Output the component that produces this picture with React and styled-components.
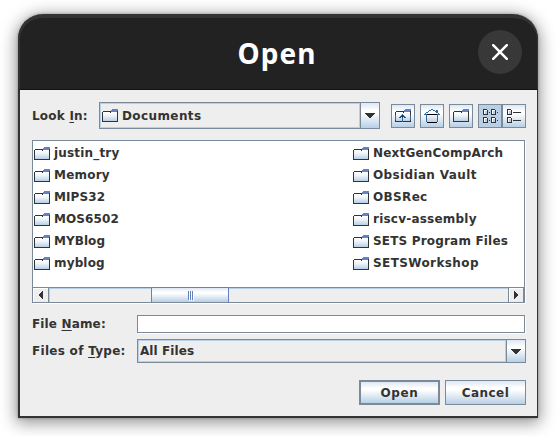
import React from "react";
import styled, { createGlobalStyle, css } from "styled-components";

const line = "#7a8a99";
const pale = "#b8cfe5";
const ink = "#333333";
const steel = "linear-gradient(#dde8f3 0%, #ffffff 30%, #ffffff 38%, #b8cfe5 100%)";

const Global = createGlobalStyle`
  *{box-sizing:border-box}
  html,body{margin:0;background:#fff;overflow:hidden}
  body{font:bold 12px/16px "DejaVu Sans",sans-serif;color:${ink}}
  button{font:inherit;color:inherit;margin:0;padding:0;border-radius:0}
  svg{display:block;flex:none}
`;
const Stage = styled.main`width:557px;height:436px;padding:14px 19px 18px 18px;background:#fff;overflow:hidden;`;
const Window = styled.section`
  width:520px;height:404px;border:2px solid #333;border-right-width:1px;border-top:0;
  border-radius:25px 25px 0 0;background:#eee;box-shadow:0 3px 16px 2px rgba(0,0,0,.42),0 0 3px rgba(0,0,0,.3);
`;
const TitleBar = styled.header`
  height:76px;margin:0 -1px 0 -2px;padding:0 15px 1px 0;display:grid;grid-template-columns:56px 1fr 44px;align-items:center;
  background:#222;border:2px solid #333;border-right-width:1px;border-top-width:4px;border-bottom:1px solid #161014;border-radius:25px 25px 0 0;
`;
const Title = styled.h1`
  grid-column:2;margin:0;text-align:center;color:#fff;
  font:bold 28px/38px "Noto Sans",sans-serif;letter-spacing:${p => p.$track}px;
`;
const Close = styled.button`
  width:44px;height:44px;border:0;border-radius:50%;background:#383838;display:grid;place-items:center;margin-top:-3px;
`;
const Body = styled.div`padding:12px 11px 0 12px;display:flex;flex-direction:column;`;
const Row = styled.div`display:flex;align-items:center;height:${p => p.$h}px;margin-bottom:${p => p.$gap}px;`;
const Text = styled.span`white-space:pre;letter-spacing:${p => p.$track ?? 0.2}px;u{text-underline-offset:2px;text-decoration-thickness:1px;text-decoration-skip-ink:none}`;
const Label = styled.label`width:${p => p.$w}px;flex:none;`;
const Combo = styled.div`width:${p => p.$w}px;height:${p => p.$h}px;border:1px solid ${line};display:flex;`;
const ComboValue = styled.div`
  flex:1;border:1px solid ${pale};display:flex;align-items:center;gap:4px;padding-left:${p => p.$pad}px;
`;
const ComboArrow = styled.div`width:19px;border-left:1px solid ${line};background:${steel};display:grid;place-items:center;`;
const Tools = styled.div`display:flex;gap:5px;margin-left:11px;`;
const Pair = styled.div`display:flex;`;
const Tool = styled.button`
  width:24px;height:24px;border:1px solid ${line};background:${p => (p.$on ? pale : steel)};display:grid;place-items:center;
`;
const List = styled.div`
  width:493px;height:163px;border:1px solid ${line};background:#fff;box-shadow:1px 1px #fff;display:flex;flex-direction:column;margin-bottom:12px;
`;
const Files = styled.div`
  flex:1;display:grid;grid-template-columns:319px 1fr;grid-template-rows:repeat(6,22px);grid-auto-flow:column;padding:1px 0 0 1px;
`;
const File = styled.div`display:flex;align-items:center;gap:4px;`;
const Scroll = styled.div`height:14px;display:flex;background:#eee;outline:1px solid ${line};`;
const ScrollButton = styled.div`
  width:16px;display:grid;place-items:center;background:#eee;border:0 solid ${line};
  box-shadow:inset 1px 1px #fff;border-right-width:1px;${p => p.$right && css`border-left-width:1px;`}
`;
const Track = styled.div`flex:1;border-top:1px solid ${pale};border-left:1px solid ${pale};padding-left:101px;`;
const Thumb = styled.div`
  width:78px;height:16px;margin-top:-2px;position:relative;border:1px solid #6382bf;border-bottom-color:${line};background:${steel};
  display:flex;align-items:center;justify-content:center;gap:1px;
`;
const Grip = styled.i`width:1px;height:9px;background:#6382bf;box-shadow:1px 1px #fff;`;
const Field = styled.input`
  width:388px;height:18px;border:1px solid ${line};border-radius:0;background:#fff;box-shadow:1px 1px #fff;outline:0;padding:0 2px;font:inherit;
`;
const Actions = styled.footer`display:flex;justify-content:flex-end;gap:5px;`;
const Action = styled.button`width:81px;height:25px;border:${p => (p.$primary ? 2 : 1)}px solid ${line};background:${steel};`;

const Pixels = ({ w, h, children }) => (
  <svg width={w} height={h} viewBox={`0 0 ${w} ${h}`} shapeRendering="crispEdges">{children}</svg>
);
const Shade = () => (
  <defs><linearGradient id="shade" x1="0" y1="0" x2="0" y2="1"><stop offset="0" stopColor="#fff" /><stop offset=".4" stopColor="#eef4fa" /><stop offset="1" stopColor={pale} /></linearGradient></defs>
);
const FolderShape = () => (
  <>
    <Shade />
    <path fill="url(#shade)" d="M1 3h14v9H1z" />
    <path fill={ink} d="M1 2h8v1H1zM0 3h1v10H0zM1 12h15v1H1zM15 2h1v10h-1zM8 3h1v1H8z" />
    <path fill="#6382bf" d="M10 0h6v1h-6zM9 1h7v1H9zM9 2h6v1H9z" />
  </>
);
const Folder = () => <Pixels w={16} h={13}><FolderShape /></Pixels>;
const UpFolder = () => (
  <Pixels w={16} h={13}>
    <FolderShape />
    <path fill="#336699" d="M7 5h1v1H7zM6 6h1v1H6zM8 6h1v1H8zM5 7h1v1H5zM9 7h1v1H9zM4 8h1v1H4zM10 8h1v1h-1zM7 9h1v4H7zM0 6h1v5H0zM15 6h1v5h-1z" />
    <path fill={ink} d="M7 6h1v3H7zM6 7h1v1H6zM8 7h1v1H8zM5 8h1v1H5zM9 8h1v1H9z" />
  </Pixels>
);
const Home = () => (
  <Pixels w={16} h={14}>
    <Shade />
    <path fill="url(#shade)" d="M3 5h10v8H3zM5 2h6v2h3v1H2V4h3z" />
    <path fill="#336699" d="M7 0h2v1H7zM5 1h2v1H5zM9 1h2v1H9zM4 2h1v1H4zM11 2h1v1h-1zM2 3h2v1H2zM12 3h2v1h-2zM1 4h1v1H1zM14 4h1v1h-1zM0 5h3v1H0zM13 5h3v1h-3zM2 6h1v7H2zM13 6h1v7h-1zM12 1h2v2h-2z" />
    <path fill="#000" d="M3 5h10v1H3zM3 13h10v1H3z" />
  </Pixels>
);
const Cell = ({ x, y }) => (
  <g transform={`translate(${x} ${y})`}>
    <path fill="#fff" d="M1 1h3v4H1z" /><path fill={pale} d="M2 2h2v3H2z" />
    <path fill={ink} fillRule="evenodd" d="M0 0h4v1h1v5H0zM1 1v4h3V1z" />
  </g>
);
const GridIcon = () => (
  <Pixels w={15} h={14}>
    {[0, 8].map(y => [0, 8].map(x => <g key={`${x}-${y}`}><Cell x={x} y={y} /><path fill={ink} d={`M${x + 6} ${y + 3}h1v1h-1z`} /></g>))}
  </Pixels>
);
const DetailIcon = () => (
  <Pixels w={14} h={14}><Cell x={0} y={0} /><Cell x={0} y={8} /><path fill={ink} d="M6 3h8v1H6zM6 11h8v1H6z" /></Pixels>
);
const Down = () => <Pixels w={10} h={5}><path fill={ink} d="M0 0h10v1H0zM1 1h8v1H1zM2 2h6v1H2zM3 3h4v1H3zM4 4h2v1H4z" /></Pixels>;
const Side = ({ flip }) => (
  <Pixels w={4} h={8}><path fill={ink} transform={flip ? "translate(4 0) scale(-1 1)" : undefined} d="M3 0h1v8H3zM2 1h1v6H2zM1 2h1v4H1zM0 3h1v2H0z" /></Pixels>
);

const files = [
  ["justin_try", 0.17], ["Memory", 0.22], ["MIPS32", 0.1], ["MOS6502", 0.1], ["MYBlog", 0.05], ["myblog", 0.15],
  ["NextGenCompArch", 0.2], ["Obsidian Vault", 0.36], ["OBSRec", 0.35], ["riscv-assembly", 0.22], ["SETS Program Files", 0.18], ["SETSWorkshop", 0.4],
];

export default function App() {
  return (
    <>
      <Global />
      <Stage>
        <Window>
          <TitleBar>
            <Title $track={1}>Open</Title>
            <Close aria-label="Close">
              <svg width="16" height="16" viewBox="0 0 16 16"><path d="M1.2 1.2l13.6 13.6M14.8 1.2L1.2 14.8" stroke="#fff" strokeWidth="2.5" strokeLinecap="round" /></svg>
            </Close>
          </TitleBar>
          <Body>
            <Row $h={27} $gap={11}>
              <Label $w={67}><Text $track={0.22}>Look <u>I</u>n:</Text></Label>
              <Combo $w={281} $h={27}>
                <ComboValue $pad={1}><Folder /><Text $track={0.4}>Documents</Text></ComboValue>
                <ComboArrow><Down /></ComboArrow>
              </Combo>
              <Tools>
                <Tool><UpFolder /></Tool>
                <Tool><Home /></Tool>
                <Tool><Folder /></Tool>
                <Pair><Tool $on><GridIcon /></Tool><Tool><DetailIcon /></Tool></Pair>
              </Tools>
            </Row>
            <List>
              <Files>{files.map(([name, track]) => <File key={name}><Folder /><Text $track={track}>{name}</Text></File>)}</Files>
              <Scroll>
                <ScrollButton><Side /></ScrollButton>
                <Track><Thumb><Grip /><Grip /><Grip /></Thumb></Track>
                <ScrollButton $right><Side flip /></ScrollButton>
              </Scroll>
            </List>
            <Row $h={18} $gap={6}>
              <Label $w={105}><Text $track={0.15}>File <u>N</u>ame:</Text></Label>
              <Field aria-label="File name" />
            </Row>
            <Row $h={24} $gap={17}>
              <Label $w={105}><Text $track={0.29}>Files of <u>T</u>ype:</Text></Label>
              <Combo $w={389} $h={24}>
                <ComboValue $pad={1}><Text $track={0.08}>All Files</Text></ComboValue>
                <ComboArrow><Down /></ComboArrow>
              </Combo>
            </Row>
            <Actions>
              <Action $primary><Text $track={0.6}>Open</Text></Action>
              <Action><Text $track={0.42}>Cancel</Text></Action>
            </Actions>
          </Body>
        </Window>
      </Stage>
    </>
  );
}
